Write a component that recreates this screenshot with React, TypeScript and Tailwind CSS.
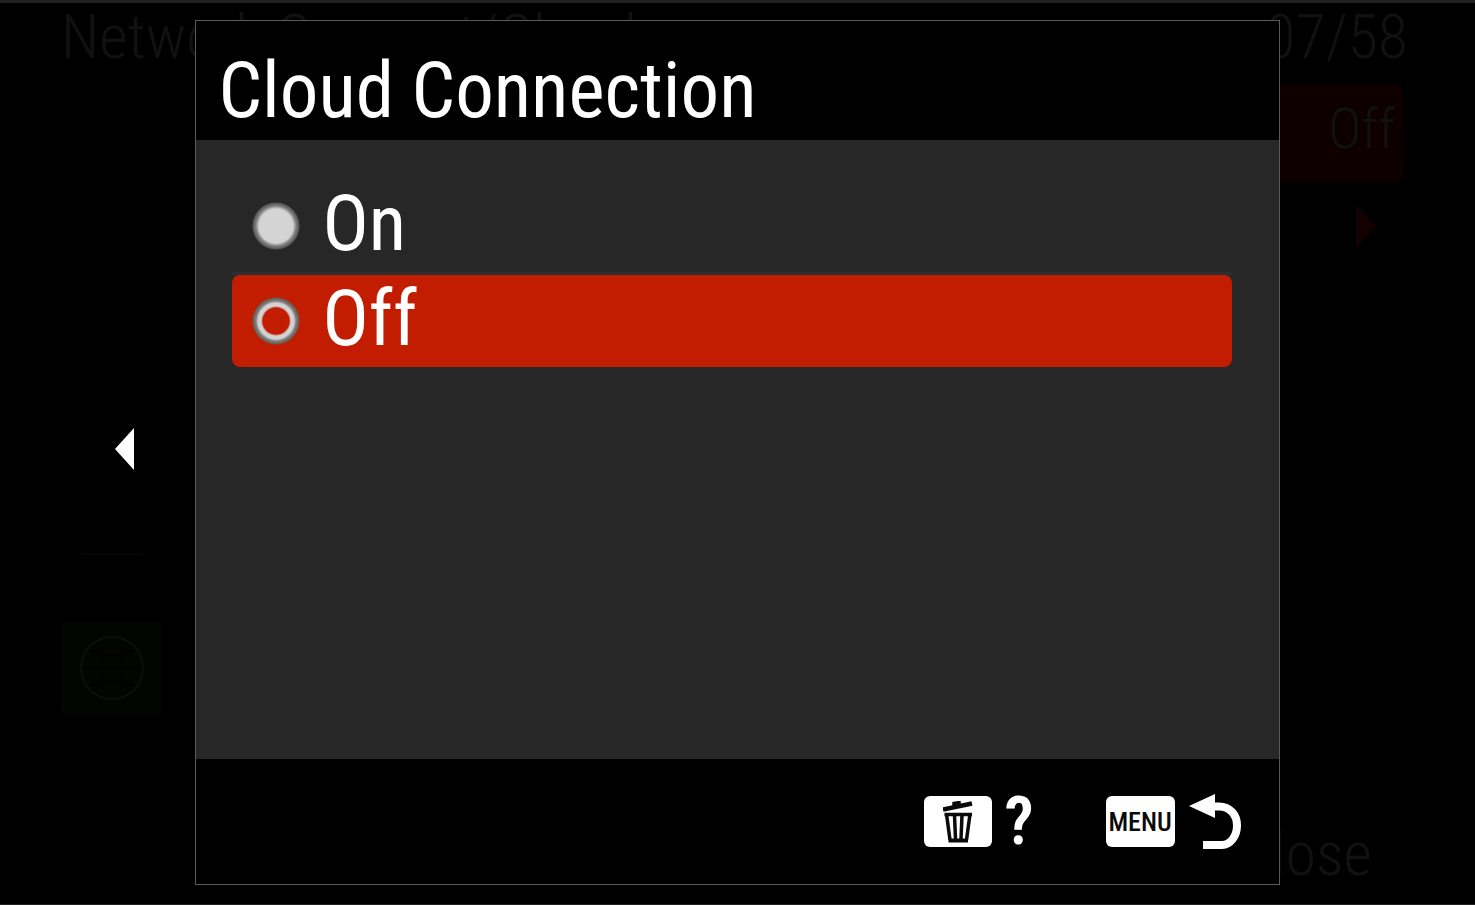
import { useState } from "react";

const options = ["On", "Off"];

function TrashIcon() {
  return (
    <svg viewBox="0 0 30 42" className="h-[42px] w-[30px]" fill="none" stroke="#0a0a0a" aria-hidden="true">
      <path d="M0 8.5 L29 2.5" strokeWidth="4.5" />
      <path d="M11 5 V2.5 L16 1.5 V4" strokeWidth="3.5" />
      <path d="M1.5 13.5 H29" strokeWidth="3.5" />
      <path d="M3.5 13 L7 39 M27 13 L23.5 39 M11.5 14 L12.5 38 M19 14 L18 38" strokeWidth="3.5" />
      <path d="M5.5 39.5 H25" strokeWidth="4" />
    </svg>
  );
}

function ReturnIcon() {
  return (
    <svg viewBox="0 0 52 56" className="h-14 w-[52px]" aria-hidden="true">
      <path d="M0 12 L26 0 V24 Z" fill="#fff" />
      <path
        d="M24 12.5 H30 C41 12.5 48 21 48 31.5 C48 42.5 41 51 33 51 H14"
        fill="none"
        stroke="#fff"
        strokeWidth="8"
      />
    </svg>
  );
}

function GlobeIcon() {
  return (
    <svg viewBox="0 0 64 64" className="size-16" fill="none" strokeWidth="2" aria-hidden="true">
      <circle cx="32" cy="32" r="31" stroke="#0c0e0c" />
      <path d="M2 32 H62 M22 12 V52 M42 12 V52 M11 14 Q32 24 53 14 M11 50 Q32 40 53 50" stroke="#000" />
    </svg>
  );
}

function Background() {
  return (
    <div className="flex min-h-screen flex-col border-t-[3px] border-b border-[#222222] pr-[67px] pl-[61px] text-[62px] leading-[68px] font-light text-[#101110]">
      <div className="flex justify-between">
        <p>Network Connect/Cloud</p>
        <p>07/58</p>
      </div>
      <div className="flex flex-1 pt-[2px]">
        <nav className="flex w-[101px] flex-col pt-[355px]">
          <button type="button" aria-label="Back" className="ml-[54px] w-5">
            <svg viewBox="0 0 20 42" className="h-[42px] w-5" aria-hidden="true">
              <path d="M0 21 L19 0 V42 Z" fill="#fff" />
            </svg>
          </button>
          <div className="mt-[83px] mr-5 ml-5 h-[2px] bg-[#030603]" />
          <div className="mt-[68px] flex h-[90px] items-center justify-center bg-[#020602]">
            <GlobeIcon />
          </div>
        </nav>
        <div className="flex flex-1 flex-col items-end pl-10">
          <div className="mt-[11px] mr-[5px] flex h-[98px] w-full items-center justify-end rounded-lg bg-[#0f0000] pr-2 pb-2 text-[56px]">
            Off
          </div>
          <svg viewBox="0 0 20 44" className="mt-[22px] mr-8 h-11 w-5" aria-hidden="true">
            <path d="M0 0 L20 22 L0 44 Z" fill="#130000" />
          </svg>
          <p className="mt-auto mr-9 mb-4">Close</p>
        </div>
      </div>
    </div>
  );
}

export default function App() {
  const [selected, setSelected] = useState("Off");

  return (
    <main className="relative min-h-screen bg-black font-['Roboto_Condensed','Liberation_Sans',sans-serif]">
      <Background />
      <div className="absolute inset-0 flex justify-center py-5">
        <section
          role="dialog"
          aria-labelledby="dialog-title"
          className="flex w-[73.5%] flex-col border border-[#5a5a5a] bg-black text-white"
        >
          <h1 id="dialog-title" className="h-[119px] pt-6 pl-[22px] text-[77px] leading-[92px]">
            Cloud Connection
          </h1>
          <fieldset className="flex-1 bg-[#272727] pt-[37px] pr-[47px] pl-9" aria-labelledby="dialog-title">
            {options.map((option) => (
              <div key={option} className="border-t-[3px] border-transparent not-first:border-[#2e2e2e]">
                <label className="flex h-[92px] items-center pl-5 text-[77px] leading-[88px] has-checked:rounded-lg has-checked:bg-[#c21d00]">
                  <input
                    type="radio"
                    name="cloud-connection"
                    value={option}
                    checked={selected === option}
                    onChange={() => setSelected(option)}
                    className="size-12 appearance-none rounded-full bg-[radial-gradient(circle,#d4d4d4_17px,#808080_20px,#555555_23px,transparent_24px)] checked:bg-[radial-gradient(circle,#c21d00_13px,#d4d4d4_15px,#d0d0d0_18px,#808080_20px,#6a5a50_23px,transparent_24px)]"
                  />
                  <span className="pb-1 pl-[22px]">{option}</span>
                </label>
              </div>
            ))}
          </fieldset>
          <footer className="flex h-[125px] items-center justify-end pr-[38px]">
            <button type="button" aria-label="Help" className="flex items-center gap-3">
              <span className="flex h-[51px] w-[68px] items-center justify-center rounded-md bg-white">
                <TrashIcon />
              </span>
              <span className="text-[66px] leading-[66px] font-semibold">?</span>
            </button>
            <button type="button" aria-label="Menu, return" className="ml-[72px] flex items-center gap-[14px]">
              <span className="flex h-[51px] w-[69px] items-center justify-center rounded-md bg-white text-[26px] leading-8 font-medium text-[#0a0a0a]">
                MENU
              </span>
              <ReturnIcon />
            </button>
          </footer>
        </section>
      </div>
    </main>
  );
}
